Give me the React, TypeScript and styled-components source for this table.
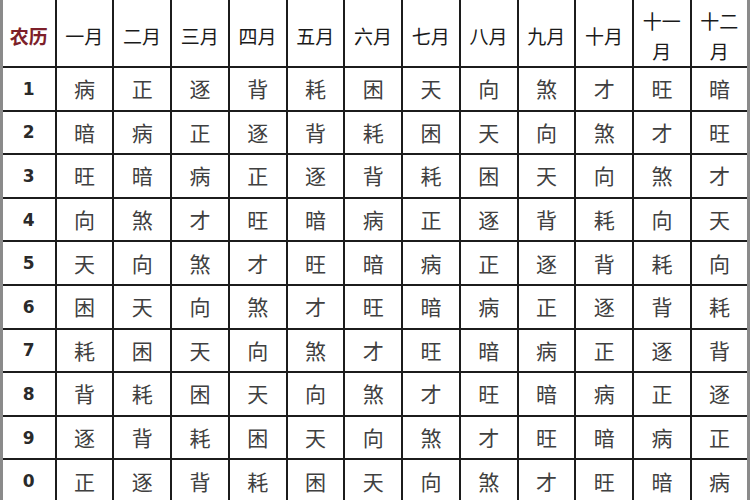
import React from 'react'
import styled, { createGlobalStyle } from 'styled-components'

const GlobalStyle = createGlobalStyle`
  html, body {
    margin: 0;
    padding: 0;
    background: #ffffff;
    overflow: hidden;
  }
`

const Table = styled.table`
  width: 750px;
  table-layout: fixed;
  border-collapse: collapse;
  font-family: "Noto Sans CJK SC", "Noto Sans", sans-serif;
  border-left: 3px solid #8a8a8a;
  border-right: 3px solid #8a8a8a;
`

const HeadCell = styled.th<{ $first?: boolean }>`
  height: 60px;
  padding: 6px 6px 0;
  border: 2px solid #1c1c1c;
  border-top: none;
  font-size: 19px;
  line-height: 30px;
  font-weight: ${p => (p.$first ? 700 : 400)};
  color: ${p => (p.$first ? '#7d1f2a' : '#1a1a1a')};
  text-align: center;
  vertical-align: middle;
`

const NumCell = styled.td`
  height: 41.6px;
  padding: 0;
  border: 2px solid #1c1c1c;
  font-family: "DejaVu Sans", Verdana, sans-serif;
  font-weight: 700;
  font-size: 17px;
  color: #2a2a2a;
  text-align: center;
  vertical-align: middle;
`

const Cell = styled.td`
  height: 41.6px;
  padding: 0;
  border: 2px solid #1c1c1c;
  font-size: 21px;
  line-height: 1;
  color: #404040;
  text-align: center;
  vertical-align: middle;
`

const months = ['一月', '二月', '三月', '四月', '五月', '六月', '七月', '八月', '九月', '十月', '十一月', '十二月']

const rows: { n: string; v: string }[] = [
  { n: '1', v: '病正逐背耗困天向煞才旺暗' },
  { n: '2', v: '暗病正逐背耗困天向煞才旺' },
  { n: '3', v: '旺暗病正逐背耗困天向煞才' },
  { n: '4', v: '向煞才旺暗病正逐背耗向天' },
  { n: '5', v: '天向煞才旺暗病正逐背耗向' },
  { n: '6', v: '困天向煞才旺暗病正逐背耗' },
  { n: '7', v: '耗困天向煞才旺暗病正逐背' },
  { n: '8', v: '背耗困天向煞才旺暗病正逐' },
  { n: '9', v: '逐背耗困天向煞才旺暗病正' },
  { n: '0', v: '正逐背耗困天向煞才旺暗病' },
]

export default function App() {
  return (
    <>
      <GlobalStyle />
      <Table>
        <colgroup>
          <col style={{ width: 54 }} />
          {months.map(m => <col key={m} />)}
        </colgroup>
        <thead>
          <tr>
            <HeadCell $first>农历</HeadCell>
            {months.map(m => <HeadCell key={m}>{m}</HeadCell>)}
          </tr>
        </thead>
        <tbody>
          {rows.map(r => (
            <tr key={r.n}>
              <NumCell>{r.n}</NumCell>
              {r.v.split('').map((c, i) => <Cell key={i}>{c}</Cell>)}
            </tr>
          ))}
        </tbody>
      </Table>
    </>
  )
}
